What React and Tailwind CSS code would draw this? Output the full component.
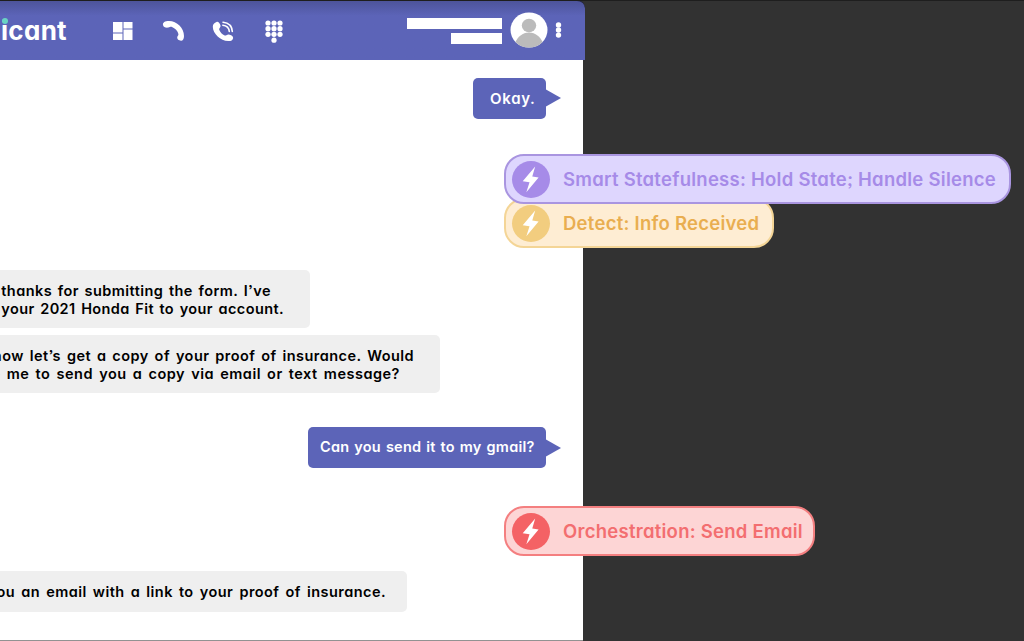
import React from "react";

function Bolt({ className }) {
  return (
    <span className={`flex h-[37px] w-[38px] shrink-0 items-center justify-center rounded-[50%] ${className}`}>
      <svg width="38" height="37" viewBox="0 0 39 37" fill="#fff">
        <path d="M23.8 5.200 11 20.200 18 21.300 14.700 31.500 27.300 16.400 20.800 15.500Z" />
      </svg>
    </span>
  );
}

function Pill({ className, iconClass, textClass, children }) {
  return (
    <div className={`relative ml-[504px] flex h-[50px] shrink-0 items-center rounded-[20px] border-2 pl-[6px] whitespace-nowrap ${className}`}>
      <Bolt className={iconClass} />
      <span className={`ml-[13px] text-[18.5px] leading-6 font-semibold tracking-[0.26px] ${textClass}`}>{children}</span>
    </div>
  );
}

function UserBubble({ className, textClass, children }) {
  return (
    <div className={`ml-auto mr-[22px] flex h-[41px] shrink-0 items-center ${className}`}>
      <div className="flex h-full flex-1 items-center rounded-[5px] bg-[#5c64b8] text-white whitespace-nowrap">
        <span className={`leading-5 font-semibold ${textClass}`}>{children}</span>
      </div>
      <svg className="-ml-px shrink-0" width="16" height="18" viewBox="0 0 16 18" fill="#5c64b8">
        <path d="M0 0.500 L1 0.500 L16 9 L1 17.500 L0 17.500Z" />
      </svg>
    </div>
  );
}

function AgentBubble({ className, children }) {
  return (
    <div className={`flex shrink-0 flex-col items-end justify-center rounded-r-[5px] bg-[#efefef] pt-px text-[14.5px] leading-[18px] font-semibold tracking-[0.45px] [word-spacing:2px] text-black whitespace-nowrap ${className}`}>
      {children}
    </div>
  );
}

function Header() {
  return (
    <header className="flex h-[60px] w-[584.500px] shrink-0 items-center rounded-tr-[8px] border-t border-[#20223c] bg-linear-to-b from-[#4d549b] from-0% via-[#5c64b8] via-25% to-[#5c64b8] text-white">
      <div className="relative ml-px w-[70px] text-[26px] leading-8 font-bold tracking-[0.3px]">
        icant
        <span className="absolute left-[0.5px] top-[3.500px] size-[6px] rounded-full bg-[#6ad3c3]" />
      </div>
      <svg className="ml-[42px]" width="20" height="18" viewBox="0 0 20 18" fill="currentColor">
        <path d="M0 0H9.500V10.500H0zM10.500 0H19.500V6.500H10.500zM0 11.500H9.500V18H0zM10.500 7.500H19.500V18H10.500z" />
      </svg>
      <svg className="ml-[29px]" width="23" height="22" viewBox="0 0 23 22" fill="currentColor">
        <path d="M1 5C.6 2.500 2.800 1 7 1 15 1 22 8 22 16c0 3-1.200 4.900-3 4.800-2.400-.2-3.800-1.500-3.800-3.200 0-1.500 1.500-2.200 1.200-3.600C15.800 11 13 8.300 10 7 8.500 6.400 8 7.400 6.300 7.600 3.500 7.900 1.400 7.200 1 5Z" />
      </svg>
      <svg className="ml-[27px]" width="23" height="22" viewBox="0 0 23 22" fill="none">
        <path fill="currentColor" d="M4.500 2C6.300 1.200 7.800 3.500 8.500 5.500 9 7.500 6.700 8.300 7.200 9.700c1 2.600 3 4.700 5.500 5.800 1.500.6 2.400-1.400 4.200-1 2 .5 4.500 1.700 4.200 3.700-.4 2-2.300 3.100-4.900 2.900C8.500 20.500 1 14 .800 6.700.7 4.200 2.500 2.700 4.500 2Z" />
        <path stroke="currentColor" strokeWidth="1.600" strokeLinecap="round" d="M11 2.200C16.500 2.800 20 6.200 20.300 11.500M10.800 5.200C14.600 5.600 17 8 17.300 11.500" />
      </svg>
      <svg className="ml-[30px] mt-[2px]" width="18" height="23" viewBox="0 0 18 23" fill="currentColor">
        <circle cx="3" cy="3" r="2.600" /><circle cx="9" cy="3" r="2.600" /><circle cx="15" cy="3" r="2.600" />
        <circle cx="3" cy="8.700" r="2.600" /><circle cx="9" cy="8.700" r="2.600" /><circle cx="15" cy="8.700" r="2.600" />
        <circle cx="3" cy="14.300" r="2.600" /><circle cx="9" cy="14.300" r="2.600" /><circle cx="15" cy="14.300" r="2.600" />
        <circle cx="9" cy="20.200" r="2.600" />
      </svg>
      <div className="ml-auto flex flex-col items-end gap-[4px]">
        <div className="h-[11px] w-[95px] bg-white" />
        <div className="h-[11px] w-[51px] bg-white" />
      </div>
      <svg className="ml-[8px] -mt-px" width="38" height="36" viewBox="0 0 38 36">
        <ellipse cx="19" cy="18" rx="18.500" ry="17.600" fill="#fff" />
        <ellipse cx="19" cy="13.500" rx="7.200" ry="6.800" fill="#bbb" />
        <path d="M5.500 30C7.500 25 12.500 20.500 19 20.500S30.500 25 32.500 30C29 33.700 24.500 35.600 19 35.600S9 33.700 5.500 30Z" fill="#bbb" />
      </svg>
      <svg className="ml-[7px] -mt-px mr-[23px]" width="7" height="16" viewBox="0 0 7 16" fill="currentColor">
        <circle cx="3.500" cy="2.900" r="2.700" /><circle cx="3.500" cy="8" r="2.700" /><circle cx="3.500" cy="13.100" r="2.700" />
      </svg>
    </header>
  );
}

export default function App() {
  return (
    <div className="h-[641px] w-[1024px] overflow-hidden border-t border-[#1e1e1e] bg-[#323232] font-['Inter','Lato',sans-serif] [font-feature-settings:'cv11','ss03']">
      <main className="-mt-px flex h-[641px] w-[583px] flex-col rounded-tr-[8px] border-b border-[#929292] bg-white">
        <Header />
        <UserBubble className="mt-[17.500px] w-[88px]" textClass="ml-[17px] mt-px text-[15px] tracking-[0.7px]">Okay.</UserBubble>
        <Pill className="z-10 mt-[35.500px] w-[507px] border-[#a995e0] bg-[#ded6fe]" iconClass="bg-[#a68be8]" textClass="text-[#a68be8]">
          Smart Statefulness: Hold State; Handle Silence
        </Pill>
        <Pill className="-mt-[6px] w-[270px] border-[#f4d596] bg-[#feedd3]" iconClass="bg-[#f2cd7f]" textClass="text-[#e9ae50]">
          Detect: Info Received
        </Pill>
        <AgentBubble className="mt-[22px] h-[58px] w-[310px]">
          <div className="pr-[39px] [word-spacing:1.5px]">thanks for submitting the form. I’ve</div>
          <div className="pr-[26px] [word-spacing:1.5px] tracking-[0.4px]">your 2021 Honda Fit to your account.</div>
        </AgentBubble>
        <AgentBubble className="mt-[7px] h-[58px] w-[440px]">
          <div className="pr-[26px] [word-spacing:1.8px]">now let’s get a copy of your proof of insurance. Would</div>
          <div className="pr-[40px] tracking-[0.5px]">like me to send you a copy via email or text message?</div>
        </AgentBubble>
        <UserBubble className="mt-[34px] w-[253px]" textClass="ml-[12px] -mt-px text-[14.5px] tracking-[0.25px] [word-spacing:1px]">Can you send it to my gmail?</UserBubble>
        <Pill className="mt-[38px] w-[311px] border-[#f47f80] bg-[#fdd5d5]" iconClass="bg-[#f46265]" textClass="text-[#f36e70]">
          Orchestration: Send Email
        </Pill>
        <AgentBubble className="mt-[15px] h-[41px] w-[407px]">
          <div className="pr-[21px]">you an email with a link to your proof of insurance.</div>
        </AgentBubble>
      </main>
    </div>
  );
}
